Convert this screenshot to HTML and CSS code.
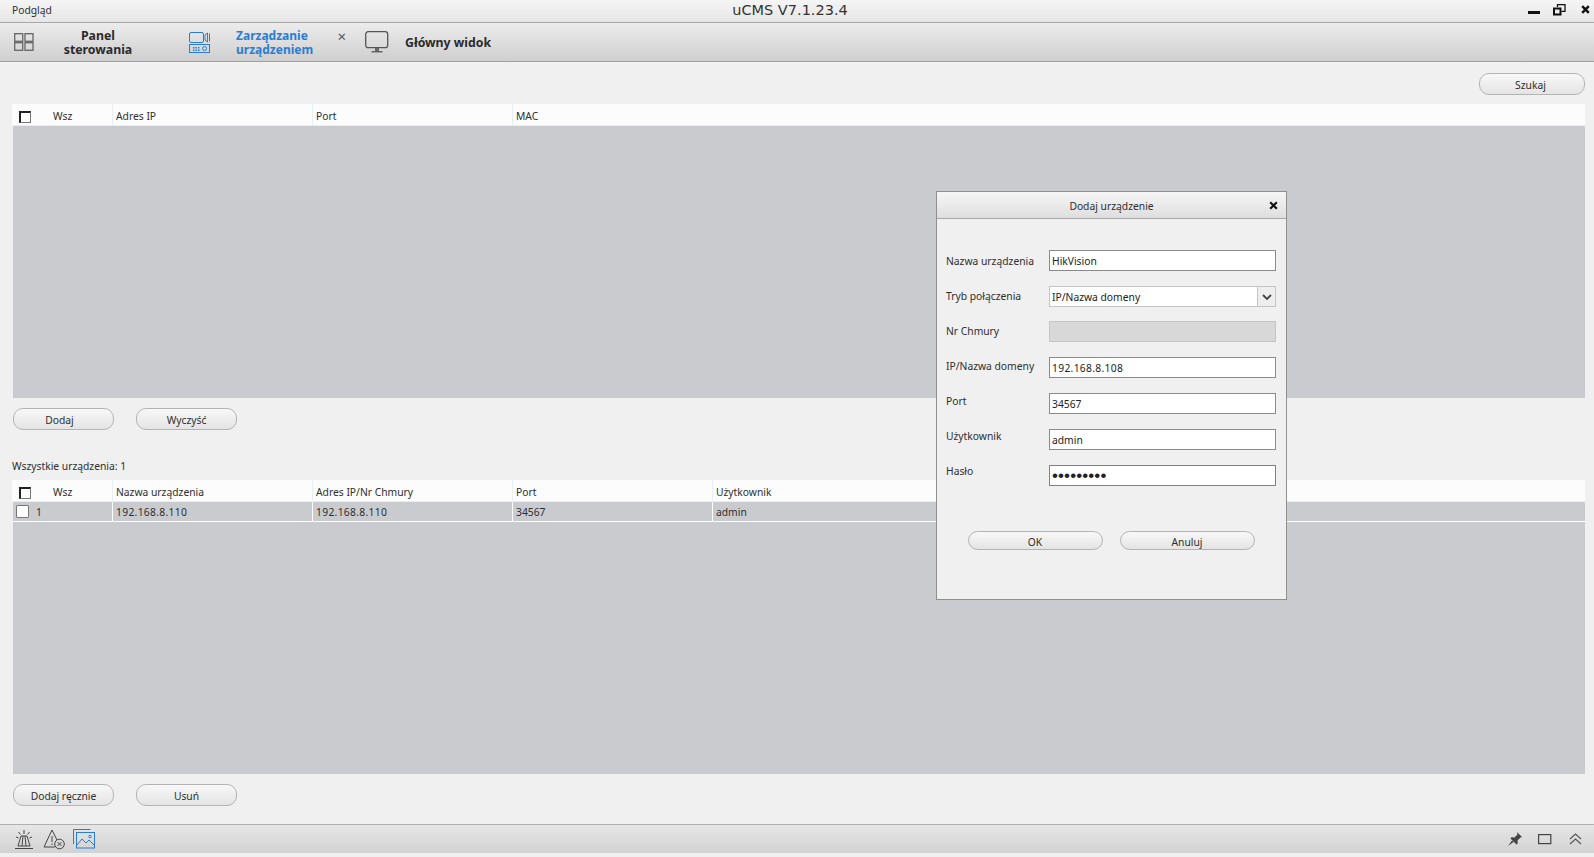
FILE: index.html
```html
<!DOCTYPE html>
<html lang="pl">
<head>
  <meta charset="UTF-8" />
  <title>uCMS V7.1.23.4</title>
  <link rel="stylesheet" href="styles.css">
</head>
<body>
  <div class="titlebar">
    <span class="preview">Podgląd</span>
    <span class="apptitle">uCMS V7.1.23.4</span>
    <div class="winbtns">
      <svg width="12" height="12" viewBox="0 0 12 12"><rect x="0" y="7" width="12" height="3" fill="#111"/></svg>
      <svg width="13" height="12" viewBox="0 0 13 12"><path d="M4.5 3V.7h7.5v6.6H8.5" fill="none" stroke="#111" stroke-width="1.3"/><rect x="1" y="4.5" width="6.5" height="6" fill="none" stroke="#111" stroke-width="2"/></svg>
      <svg width="9" height="9" viewBox="0 0 9 9"><path d="M1.200 1.200l6.600 6.600M7.800 1.200L1.200 7.800" stroke="#111" stroke-width="2.400"/></svg>
    </div>
  </div>

  <nav class="toolbar">
    <div class="tab tab-panel">
      <svg class="tab-icon" width="20" height="18" viewBox="0 0 20 18"><g fill="none" stroke="#666" stroke-width="1.300"><rect x=".7" y=".7" width="8" height="7.600"/><rect x="11" y=".7" width="8" height="7.600"/><rect x=".7" y="9.700" width="8" height="7.600"/><rect x="11" y="9.700" width="8" height="7.600"/></g></svg>
      <span class="tab-label">Panel<br>sterowania</span>
    </div>
    <div class="tab tab-devices">
      <svg class="tab-icon" width="22" height="22" viewBox="0 0 22 22"><g fill="none" stroke="#2b7cd3" stroke-width="1"><rect x=".5" y="1.500" width="14" height="10" rx="1.500"/><path d="M16 4l2.500-2v9L16 9zM20.500 2.500v8"/><rect x=".5" y="13.500" width="20" height="8"/><circle cx="15.500" cy="17.500" r="2"/></g><path d="M4 16h1.500v1.500H4zM6.500 16H8v1.500H6.500zM9 16h1.500v1.500H9zM4 18.500h1.500V20H4zM6.500 18.500H8V20H6.500zM9 18.500h1.500V20H9z" fill="#2b7cd3"/></svg>
      <span class="tab-label active">Zarządzanie<br>urządzeniem</span>
      <span class="tab-close">×</span>
    </div>
    <div class="tab tab-main">
      <svg class="tab-icon" width="24" height="23" viewBox="0 0 24 23"><rect x=".7" y=".7" width="22" height="16" rx="2.500" fill="none" stroke="#555" stroke-width="1.300"/><rect x="10" y="17" width="4" height="3" fill="#666"/><rect x="6.500" y="20" width="11" height="1.500" fill="#666"/></svg>
      <span class="tab-label">Główny widok</span>
    </div>
  </nav>

  <main class="content">
    <div class="search-row"><button class="btn btn-search">Szukaj</button></div>

    <section class="grid grid-top">
      <div class="row head">
        <div class="cell c-check"><span class="head-check"></span><span class="wsz">Wsz</span></div>
        <div class="cell c-col">Adres IP</div>
        <div class="cell c-col">Port</div>
        <div class="cell c-rest">MAC</div>
      </div>
    </section>
    <div class="btn-row">
      <button class="btn btn-add">Dodaj</button>
      <button class="btn">Wyczyść</button>
    </div>

    <div class="count">Wszystkie urządzenia: 1</div>

    <section class="grid grid-bottom">
      <div class="row head">
        <div class="cell c-check"><span class="head-check"></span><span class="wsz">Wsz</span></div>
        <div class="cell c-col">Nazwa urządzenia</div>
        <div class="cell c-col">Adres IP/Nr Chmury</div>
        <div class="cell c-col">Port</div>
        <div class="cell c-rest">Użytkownik</div>
      </div>
      <div class="row data">
        <div class="cell c-check"><span class="row-check"></span><span>1</span></div>
        <div class="cell c-col ip">192.168.8.110</div>
        <div class="cell c-col ip">192.168.8.110</div>
        <div class="cell c-col">34567</div>
        <div class="cell c-rest">admin</div>
      </div>
    </section>
    <div class="btn-row">
      <button class="btn">Dodaj ręcznie</button>
      <button class="btn">Usuń</button>
    </div>
  </main>

  <footer class="statusbar">
    <div class="status-left">
      <svg width="22" height="22" viewBox="1 0 20 22"><g fill="none" stroke="#444" stroke-width="1"><path d="M8 8h6l3 10H5zM10 8l-1 10M12 8l1 10M11 2v4M5.500 4l2 2.500M16.500 4l-2 2.500M3 9l2.500 1M19 9l-2.500 1M2 20.500h18"/></g></svg>
      <svg width="23" height="22" viewBox="0 0 23 22"><path d="M9 2L1 19h11M9 2l5 10M9 8v6M9 15.500v1.500" fill="none" stroke="#444" stroke-width="1"/><circle cx="16.500" cy="16" r="4.800" fill="none" stroke="#444"/><path d="M14.500 14l4 4M18.500 14l-4 4" stroke="#444"/></svg>
      <svg width="22" height="20" viewBox="0 0 22 20"><g fill="none" stroke="#2b7cd3" stroke-width="1"><path d="M.5 15V.5h17"/><rect x="3.500" y="3.500" width="18" height="15.500"/><path d="M4 16l5-6 4 4 3-3 5 5"/><circle cx="17" cy="7.500" r="1.300"/></g></svg>
    </div>
    <div class="status-right">
      <svg width="16" height="16" viewBox="0 0 16 16"><path d="M10 1l5 5-1.500.5-3 3 .2 3-1.200 1-6-6 1-1.200 3 .2 3-3zM5 9.500l-4 5.500 5.500-4z" fill="#444"/></svg>
      <svg width="14" height="11" viewBox="0 0 14 11"><rect x=".6" y=".6" width="12.200" height="9" fill="none" stroke="#444" stroke-width="1.200"/></svg>
      <svg width="13" height="12" viewBox="0 0 13 12"><path d="M1 6l5.500-5L12 6M1 11l5.500-5 5.500 5" fill="none" stroke="#555" stroke-width="1.100"/></svg>
    </div>
  </footer>

  <div class="dialog">
    <div class="dialog-title">
      <span>Dodaj urządzenie</span>
      <svg class="dialog-close" width="9" height="9" viewBox="0 0 9 9"><path d="M1.200 1.200l6.600 6.600M7.800 1.200L1.200 7.800" stroke="#111" stroke-width="2.200"/></svg>
    </div>
    <div class="dialog-body">
      <div class="form">
        <div class="labels">
          <label>Nazwa urządzenia</label>
          <label>Tryb połączenia</label>
          <label>Nr Chmury</label>
          <label>IP/Nazwa domeny</label>
          <label>Port</label>
          <label>Użytkownik</label>
          <label>Hasło</label>
        </div>
        <div class="fields">
          <div class="field">HikVision</div>
          <div class="field select"><span class="select-text">IP/Nazwa domeny</span><span class="select-arrow"><svg width="10" height="6" viewBox="0 0 10 6"><path d="M1 1l4 4 4-4" fill="none" stroke="#444" stroke-width="1.800"/></svg></span></div>
          <div class="field disabled"></div>
          <div class="field ip">192.168.8.108</div>
          <div class="field">34567</div>
          <div class="field">admin</div>
          <div class="field focus">•••••••••</div>
        </div>
      </div>
      <div class="dialog-btns">
        <button class="btn">OK</button>
        <button class="btn">Anuluj</button>
      </div>
    </div>
  </div>
</body>
</html>
```

FILE: styles.css
```css
html, body {
  margin: 0;
  height: 857px;
  overflow: hidden;
}

body {
  font-family: "Noto Sans", Arial, sans-serif;
  font-size: 10.3px;
  color: #2e2e2e;
  background: #f0f0f0;
  display: flex;
  flex-direction: column;
  position: relative;
}

.titlebar {
  height: 19px;
  flex: none;
  display: flex;
  align-items: center;
  justify-content: space-between;
  padding: 0 4px 3px 12px;
  position: relative;
  background: linear-gradient(#f5f5f5, #e6e6e6);
  border-bottom: 1px solid #a8a8a8;
}

.apptitle {
  position: absolute;
  top: 0;
  left: 0;
  right: 14px;
  line-height: 20px;
  text-align: center;
  font-family: "DejaVu Sans", sans-serif;
  font-size: 14.500px;
  color: #333;
}

.winbtns {
  display: flex;
  align-items: center;
  gap: 15px;
  position: relative;
}

.winbtns svg:first-child { margin-right: -2px; }

.toolbar {
  height: 38px;
  flex: none;
  display: flex;
  align-items: center;
  background: linear-gradient(#ececec, #cfcfcf);
  border-bottom: 1px solid #a0a0a0;
}

.tab {
  display: flex;
  align-items: center;
  height: 100%;
  position: relative;
}

.tab-panel { width: 174px; padding-left: 14px; box-sizing: border-box; }
.tab-devices { width: 175px; padding-left: 15px; box-sizing: border-box; }
.tab-main { padding-left: 16px; }

.tab-label {
  padding-top: 2px;
  font-size: 12.300px;
  font-weight: 700;
  line-height: 14px;
  color: #2b2b2b;
  text-align: center;
}

.tab-panel .tab-label { width: 106px; margin-left: 11px; }
.tab-devices .tab-label { margin-left: 25px; text-align: left; font-size: 12px; }
.tab-main .tab-label { margin-left: 16px; }
.tab-label.active { color: #2b7cd3; }

.tab-close {
  position: absolute;
  top: 3px;
  right: 3px;
  font-size: 15px;
  color: #555;
}

.content {
  flex: 1;
  display: flex;
  flex-direction: column;
  padding: 11px 9px 0 12px;
}

.search-row {
  display: flex;
  justify-content: flex-end;
  height: 31px;
}

.btn {
  width: 101px;
  height: 22px;
  padding: 2px 0 0;
  border: 1px solid #b4b4b4;
  border-radius: 10px;
  background: linear-gradient(#f8f8f8, #e4e4e4);
  font-family: inherit;
  font-size: 10.300px;
  color: #2e2e2e;
}

.btn-search { width: 106px; padding-right: 3px; }
.btn-add { padding-right: 8px; }

.grid {
  background: #cacbcf;
  margin-left: 1px;
}

.grid-top { height: 294px; }
.grid-bottom { height: 294px; }

.row {
  display: flex;
}

.head {
  height: 21px;
  margin-left: -1px;
  background: #fcfcfc;
  border-bottom: 1px solid #e6eef8;
}

.data {
  height: 19px;
  border-bottom: 1px solid #fff;
}

.cell {
  display: flex;
  align-items: center;
  padding-left: 3px;
  box-sizing: border-box;
  border-right: 1px solid #e6eef8;
}

.head .cell { padding-top: 2px; }

.data .cell { border-right-color: #fff; }

.ip { letter-spacing: 0.3px; }

.c-check { width: 101px; padding-left: 7px; flex: none; }
.data .c-check { width: 100px; padding-left: 3px; }
.c-col { width: 200px; flex: none; }
.c-rest { flex: 1; border-right: 0; }

.head-check {
  width: 9px;
  height: 9px;
  margin-top: 2px;
  background: #fff;
  border: 1px solid #777;
  border-top: 2px solid #222;
  border-left: 2px solid #222;
}

.wsz { margin-left: 22px; }

.row-check {
  width: 11px;
  height: 11px;
  margin-right: 7px;
  background: #fff;
  border: 1px solid #777;
  border-radius: 1px;
}

.btn-row {
  display: flex;
  gap: 22px;
  margin: 10px 0 0 1px;
}

.count {
  margin-top: 29px;
  height: 14px;
  line-height: 14px;
}

.grid-bottom { margin-top: 7px; }

.statusbar {
  height: 28px;
  flex: none;
  margin-bottom: 4px;
  display: flex;
  align-items: center;
  justify-content: space-between;
  padding: 0 12px 0 13px;
  background: linear-gradient(#e6e6e6, #d2d2d2);
  border-top: 1px solid #b0b0b0;
}

.status-left {
  display: flex;
  align-items: center;
  gap: 7px;
}

.status-left svg:first-child { margin-right: 1px; }

.status-right {
  display: flex;
  align-items: center;
  gap: 15px;
}

.status-right svg:last-child { margin-left: 2px; }

.dialog {
  position: absolute;
  left: 936px;
  top: 191px;
  width: 351px;
  height: 409px;
  box-sizing: border-box;
  border: 1px solid #8f8f8f;
  background: #f0f0f0;
  display: flex;
  flex-direction: column;
}

.dialog-title {
  height: 27px;
  padding-top: 1px;
  box-sizing: border-box;
  flex: none;
  display: flex;
  align-items: center;
  justify-content: center;
  position: relative;
  background: linear-gradient(#f6f6f6, #dedede);
  border-bottom: 1px solid #a8a8a8;
}

.dialog-close {
  position: absolute;
  right: 8px;
  top: 9px;
}

.dialog-body {
  padding: 31px 10px 0 9px;
}

.form {
  display: grid;
  grid-template-columns: 103px 1fr;
}

.labels {
  display: flex;
  flex-direction: column;
  gap: 14px;
}

.labels label {
  line-height: 23px;
  height: 21px;
}

.fields {
  display: flex;
  flex-direction: column;
  gap: 15px;
}

.field {
  height: 19px;
  border: 1px solid #8a8a8a;
  background: #fff;
  padding-left: 2px;
  line-height: 20px;
  color: #222;
}

.field.disabled {
  margin-top: -1px;
  background: #d8d8d8;
  border-color: #c4c4c4;
}

.field.focus {
  border-color: #3b93d8;
  font-family: "Liberation Sans", Arial, sans-serif;
  font-size: 17px;
  letter-spacing: 0.1px;
}

.select {
  display: flex;
  justify-content: space-between;
  border-color: #c4c4c4;
}

.select-arrow {
  width: 17px;
  display: flex;
  align-items: center;
  justify-content: center;
  border-left: 1px solid #c4c4c4;
  background: #eee;
}

.dialog-btns {
  display: flex;
  justify-content: center;
  gap: 17px;
  margin-top: 45px;
}

.dialog-btns .btn {
  width: 135px;
  height: 19px;
}
```
